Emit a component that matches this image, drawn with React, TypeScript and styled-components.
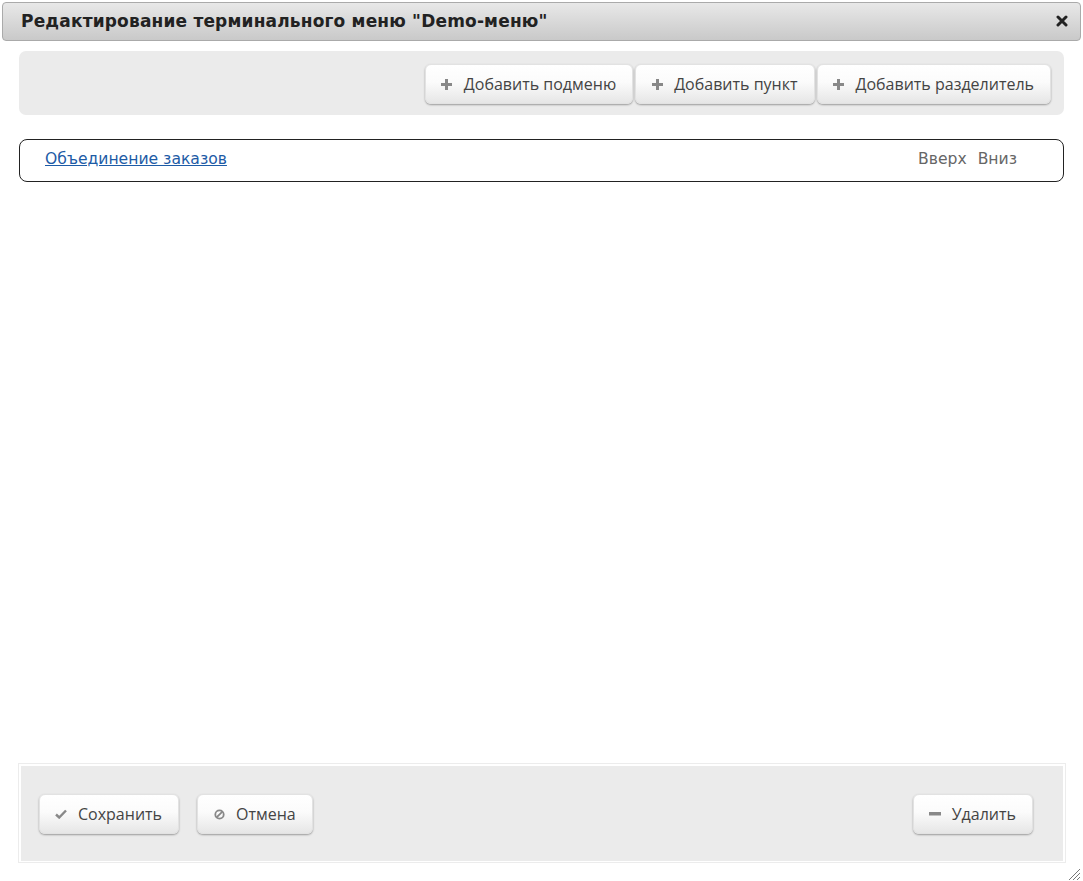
import { FC, ReactNode } from 'react'
import styled, { createGlobalStyle } from 'styled-components'

const GlobalStyle = createGlobalStyle`
  html, body {
    margin: 0;
    padding: 0;
    background: #fff;
  }
  body {
    font-family: 'Open Sans', 'Liberation Sans', sans-serif;
    color: #333;
  }
`

const StyledDialog = styled.div`
  position: relative;
  height: 881px;
  display: flex;
  flex-direction: column;
  box-sizing: border-box;
`

const StyledTitleBar = styled.div`
  margin: 2px 2px 0 2px;
  height: 39px;
  box-sizing: border-box;
  border: 1px solid #aaa;
  border-radius: 4px;
  background: linear-gradient(to bottom, #e8e8e8 0%, #c9c9c9 100%);
  display: flex;
  align-items: center;
  justify-content: space-between;
  padding: 0 12px 1px 18px;
`

const StyledTitle = styled.span`
  font-family: 'DejaVu Sans', Verdana, sans-serif;
  font-weight: bold;
  font-size: 17px;
  letter-spacing: 0.18px;
  color: #222;
`

const StyledClose = styled.button`
  border: none;
  background: transparent;
  padding: 0;
  width: 12px;
  height: 12px;
  display: flex;
  align-items: center;
  justify-content: center;
  cursor: pointer;
`

const StyledBody = styled.div`
  flex: 1;
  display: flex;
  flex-direction: column;
  padding: 10px 19px 18px 19px;
`

const StyledToolbar = styled.div`
  height: 64px;
  box-sizing: border-box;
  background: #ebebeb;
  border-radius: 7px;
  display: flex;
  align-items: center;
  justify-content: flex-end;
  gap: 2px;
  padding: 2px 13px 0 0;
`

const StyledButton = styled.button`
  height: 40px;
  box-sizing: border-box;
  display: flex;
  align-items: center;
  gap: 11px;
  padding: 0 16px 0 15px;
  border: 1px solid #e2e2e2;
  border-radius: 6px;
  background: linear-gradient(to bottom, #ffffff 0%, #fbfbfb 45%, #e6e6e6 100%);
  box-shadow: 0 1px 2px rgba(0, 0, 0, 0.35);
  font-family: 'Open Sans', 'Liberation Sans', sans-serif;
  font-size: 16px;
  color: #444;
  cursor: pointer;
`

const StyledIcon = styled.span`
  width: 12px;
  height: 12px;
  display: flex;
  align-items: center;
  justify-content: center;
`

const StyledItemRow = styled.div`
  margin-top: 24px;
  height: 43px;
  box-sizing: border-box;
  border: 1px solid #222;
  border-radius: 8px;
  display: flex;
  align-items: center;
  justify-content: space-between;
  padding: 0 46px 4px 25px;
  font-family: 'DejaVu Sans', Verdana, sans-serif;
  font-size: 15.6px;
`

const StyledLink = styled.a`
  color: #1d5ba6;
  text-decoration: underline;
  cursor: pointer;
`

const StyledMoves = styled.div`
  display: flex;
  gap: 11px;
  color: #666;
`

const StyledFooter = styled.div`
  margin-top: auto;
  height: 100px;
  box-sizing: border-box;
  border: 1px solid #ececec;
  padding: 2px;
  background: #fff;
  margin-left: -1px;
  margin-right: -2px;
`

const StyledFooterInner = styled.div`
  height: 100%;
  background: #ebebeb;
  display: flex;
  align-items: center;
  padding: 1px 30px 0 18px;
  gap: 18px;
`

const StyledSpacer = styled.div`
  flex: 1;
`

const StyledGrip = styled.div`
  position: absolute;
  right: 2px;
  bottom: 4px;
  width: 13px;
  height: 13px;
`

const PlusIcon = () => (
  <svg width="11" height="11" viewBox="0 0 11 11">
    <path d="M4 0h3v4h4v3H7v4H4V7H0V4h4z" fill="#888" />
  </svg>
)

const CheckIcon = () => (
  <svg width="12" height="10" viewBox="0 0 12 10">
    <path d="M1 5.5l3.2 3L11 1.5" stroke="#888" strokeWidth="2.4" fill="none" />
  </svg>
)

const BanIcon = () => (
  <svg width="11" height="11" viewBox="0 0 11 11">
    <circle cx="5.5" cy="5.5" r="4.2" stroke="#888" strokeWidth="1.8" fill="none" />
    <path d="M2.6 8.4L8.4 2.6" stroke="#888" strokeWidth="1.8" />
  </svg>
)

const MinusIcon = () => (
  <svg width="12" height="4" viewBox="0 0 12 4">
    <rect x="0" y="0" width="12" height="3.5" fill="#888" />
  </svg>
)

const CloseIcon = () => (
  <svg width="12" height="12" viewBox="0 0 12 12">
    <path d="M2 2l8 8M10 2l-8 8" stroke="#222" strokeWidth="3" strokeLinecap="round" />
  </svg>
)

type ButtonProps = {
  icon: ReactNode
  children: ReactNode
}

const Button: FC<ButtonProps> = ({ icon, children }) => (
  <StyledButton>
    <StyledIcon>{icon}</StyledIcon>
    <span>{children}</span>
  </StyledButton>
)

const App: FC = () => {
  return (
    <StyledDialog>
      <GlobalStyle />
      <StyledTitleBar>
        <StyledTitle>Редактирование терминального меню "Demo-меню"</StyledTitle>
        <StyledClose>
          <CloseIcon />
        </StyledClose>
      </StyledTitleBar>

      <StyledBody>
        <StyledToolbar>
          <Button icon={<PlusIcon />}>Добавить подменю</Button>
          <Button icon={<PlusIcon />}>Добавить пункт</Button>
          <Button icon={<PlusIcon />}>Добавить разделитель</Button>
        </StyledToolbar>

        <StyledItemRow>
          <StyledLink>Объединение заказов</StyledLink>
          <StyledMoves>
            <span>Вверх</span>
            <span>Вниз</span>
          </StyledMoves>
        </StyledItemRow>

        <StyledFooter>
          <StyledFooterInner>
            <Button icon={<CheckIcon />}>Сохранить</Button>
            <Button icon={<BanIcon />}>Отмена</Button>
            <StyledSpacer />
            <Button icon={<MinusIcon />}>Удалить</Button>
          </StyledFooterInner>
        </StyledFooter>
      </StyledBody>

      <StyledGrip>
        <svg width="13" height="13" viewBox="0 0 13 13">
          <path d="M12 1L1 12M12 5L5 12M12 9L9 12" stroke="#777" strokeWidth="1" />
        </svg>
      </StyledGrip>
    </StyledDialog>
  )
}

export default App
